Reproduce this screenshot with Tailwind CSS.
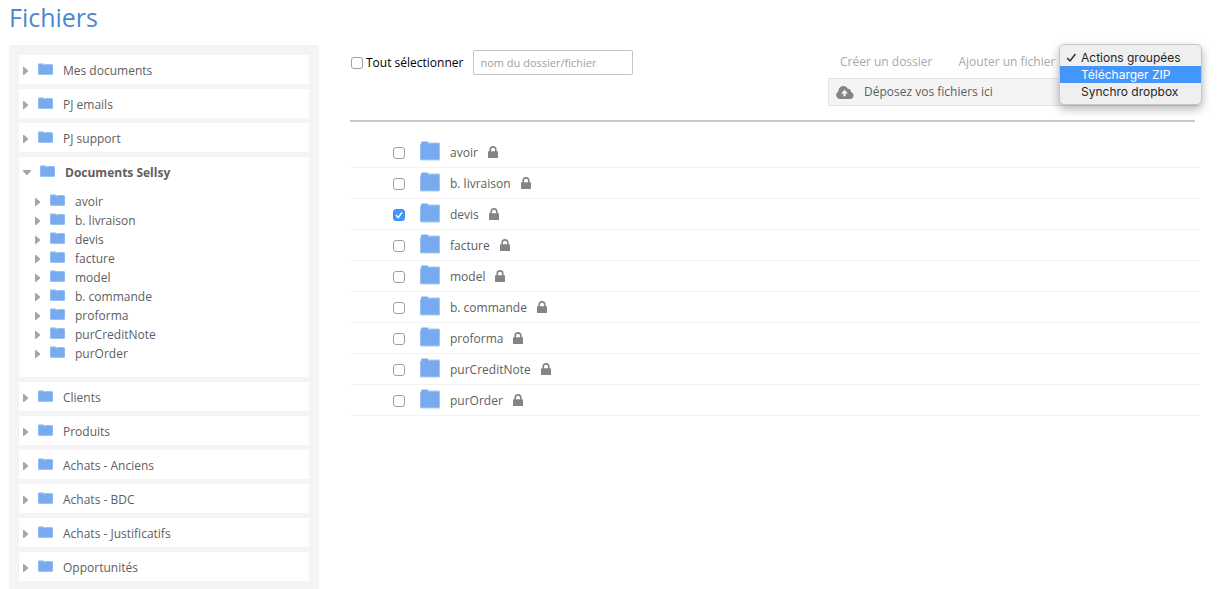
<!DOCTYPE html>
<html lang="fr">
<head>
    <meta charset="UTF-8">
    <meta name="viewport" content="width=device-width, initial-scale=1.0">
    <title>Fichiers</title>
    <script src="https://cdn.jsdelivr.net/npm/@tailwindcss/browser@4"></script>
</head>
<body class="bg-white font-['Open_Sans',sans-serif] text-[12px] text-[#606060]">
    <!-- Icons -->
    <svg class="hidden">
        <symbol id="icon-folder-small" viewBox="0 0 16 12">
            <path d="M0 1.4Q0 .2 1.2 .2H5.2Q6 .2 6.4 1.2H14Q15 1.2 15 2.2V11Q15 12 14 12H1Q0 12 0 11z" fill="#a9cdf3"/>
            <path d="M.5 2.2Q.5 1.2 1.4 1.2H5L6 2.4H6.8L7.2 1.6H13.8Q14.6 1.8 14.6 2.6V10.4Q14.6 11.2 13.8 11.2H1.2Q.5 11.2 .5 10.4z" fill="#78aaf0"/>
        </symbol>
        <symbol id="icon-folder" viewBox="0 0 20 20">
            <path d="M1 1.2Q1 .2 2 .2H7.4Q8.6 .2 8.8 1.6H19Q20 1.6 20 2.6V18.6Q20 19.6 19 19.6H1Q0 19.6 0 18.6V4Q0 3 1 2.6z" fill="#a9cdf3"/>
            <path d="M1.4 2Q1.4 1 2.2 1H7Q7.8 1 8.2 2.4L9.4 3.4 10.2 2.6H18.4Q19.2 2.6 19.2 3.4V17.8Q19.2 18.6 18.4 18.6H1.4Q.6 18.6 .6 17.8V4.4Q.6 3.6 1.4 3.2z" fill="#78aaf0"/>
        </symbol>
        <symbol id="icon-lock" viewBox="0 0 10 12">
            <path d="M2.2 6V3.7a2.8 2.8 0 0 1 5.6 0V6" fill="none" stroke="#848484" stroke-width="1.6"/>
            <rect x="0" y="5.2" width="10" height="6.8" rx=".6" fill="#848484"/>
        </symbol>
        <symbol id="icon-right" viewBox="0 0 5 8">
            <path d="M0 0H1L5 3.5V4.5L1 8H0z" fill="#a6a6a6"/>
        </symbol>
        <symbol id="icon-down" viewBox="0 0 8 5">
            <path d="M0 0H8V1L4.5 5H3.5L0 1z" fill="#a6a6a6"/>
        </symbol>
    </svg>

    <h1 class="pl-[9px] pt-px text-[25px] leading-8 text-[#4b88cf]">Fichiers</h1>

    <div class="flex items-stretch pl-[9px] pr-[26px] pt-3">
        <!-- Folder tree -->
        <nav class="w-[310px] shrink-0 bg-[#f4f4f4] px-2.5 pb-2 pt-2.5">
            <ul id="tree" class="flex flex-col gap-[5px]"></ul>
        </nav>

        <main class="ml-[31px] min-w-0 flex-1">
            <!-- Toolbar -->
            <div class="mr-[5px] flex items-start justify-between border-b-2 border-[#c8c8c8] pb-[14px]">
                <div class="flex items-center pt-[5px]">
                    <label class="flex items-center gap-[3px] pl-px text-black">
                        <input type="checkbox" class="size-3 appearance-none rounded-[3px] border border-[#a0a0a0] bg-white">
                        Tout sélectionner
                    </label>
                    <input type="text" aria-label="nom du dossier/fichier" placeholder="nom du dossier/fichier" class="ml-2.5 h-[25px] w-40 rounded-[2px] border border-[#c4c4c4] px-1.5 text-[11px] placeholder:text-[#a0a0a0]">
                </div>
                <div class="w-[367px]">
                    <div class="relative flex h-[33px] items-center pl-3 text-[#a8a8a8]">
                        <a href="#" class="whitespace-nowrap">Créer un dossier</a>
                        <a href="#" class="ml-[26px] whitespace-nowrap">Ajouter un fichier</a>
                        <select aria-label="Actions groupées" class="ml-2 h-5 w-[120px] appearance-none">
                            <option>Actions groupées</option>
                            <option>Télécharger ZIP</option>
                            <option>Synchro dropbox</option>
                        </select>
                        <!-- Open menu of the select -->
                        <ul role="listbox" class="absolute -right-[7px] -top-px z-10 w-[143px] rounded-[5px] border border-[#c6c6c6] bg-[#efefef] py-1 font-[Inter,sans-serif] text-[12px] leading-[17px] text-[#262626] shadow-[0_4px_10px_rgba(0,0,0,0.3)]">
                            <li role="option" class="flex items-center pl-1.5">
                                <svg class="mr-1 size-[11px]" viewBox="0 0 11 11"><path d="M1.2 6 4 9 9.4 2" fill="none" stroke="#262626" stroke-width="1.4"/></svg>
                                Actions groupées
                            </li>
                            <li role="option" aria-selected="true" class="bg-[#4396fb] pl-[21px] text-white">Télécharger ZIP</li>
                            <li role="option" class="pl-[21px]">Synchro dropbox</li>
                        </ul>
                    </div>
                    <div class="-mr-[3px] flex h-7 items-center border border-[#e4e4e4] bg-[#f4f4f4] pl-[7px]">
                        <svg class="mr-2.5 h-[13px] w-[18px]" viewBox="0 0 18 13">
                            <path d="M4 13A4 4 0 0 1 2.4 5.4 5 5 0 0 1 11.8 2.8 3 3 0 0 1 15 6 3.6 3.6 0 0 1 14.4 13z" fill="#848484"/>
                            <path d="M8.5 3.8 12 7.4H9.6V10.2H7.4V7.4H5z" fill="#f4f4f4"/>
                        </svg>
                        Déposez vos fichiers ici
                    </div>
                </div>
            </div>

            <!-- Files -->
            <ul id="files" class="pt-[15px]"></ul>
        </main>
    </div>

    <script>
        const folders = ['avoir', 'b. livraison', 'devis', 'facture', 'model', 'b. commande', 'proforma', 'purCreditNote', 'purOrder'];
        const roots = ['Mes documents', 'PJ emails', 'PJ support', 'Documents Sellsy', 'Clients', 'Produits', 'Achats - Anciens', 'Achats - BDC', 'Achats - Justificatifs', 'Opportunités'];

        const subTree = folders.map(name => `
            <li>
                <button class="flex h-[19px] items-center">
                    <svg class="h-2 w-[5px]"><use href="#icon-right"/></svg>
                    <svg class="mb-[3px] ml-2.5 h-3 w-4"><use href="#icon-folder-small"/></svg>
                    <span class="ml-[9px]">${name}</span>
                </button>
            </li>
        `).join('');

        document.getElementById('tree').innerHTML = roots.map(name => {
            if (name === 'Documents Sellsy') {
                return `
                    <li class="bg-white pb-[14px]">
                        <button class="flex h-[31px] items-center pl-1 font-bold" aria-expanded="true">
                            <svg class="h-[5px] w-2"><use href="#icon-down"/></svg>
                            <svg class="mb-[3px] ml-[9px] h-3 w-4"><use href="#icon-folder-small"/></svg>
                            <span class="ml-[9px]">${name}</span>
                        </button>
                        <ul class="pl-4 pt-1">${subTree}</ul>
                    </li>
                `;
            }
            return `
                <li class="bg-white">
                    <button class="flex h-[29px] w-full items-center pl-1 pt-0.5">
                        <svg class="h-2 w-[5px]"><use href="#icon-right"/></svg>
                        <svg class="mb-[3px] ml-2.5 h-3 w-4"><use href="#icon-folder-small"/></svg>
                        <span class="ml-[9px]">${name}</span>
                    </button>
                </li>
            `;
        }).join('');

        document.getElementById('files').innerHTML = folders.map(name => `
            <li class="flex h-[31px] items-center border-b border-[#f2f2f2] pl-[43px] pt-0.5">
                <label class="flex items-center">
                    <span class="relative flex size-3">
                        <input type="checkbox" ${name === 'devis' ? 'checked' : ''} class="peer size-3 appearance-none rounded-[3px] border border-[#a0a0a0] bg-white checked:border-[#3b8df5] checked:bg-[#4396fb]">
                        <svg class="absolute inset-0 hidden size-3 peer-checked:block" viewBox="0 0 12 12"><path d="M3 6.2 5.2 8.6 9 3.4" fill="none" stroke="#fff" stroke-width="1.6"/></svg>
                    </span>
                    <svg class="mb-1 ml-[15px] size-5"><use href="#icon-folder"/></svg>
                    <span class="ml-2.5">${name}</span>
                </label>
                <svg class="mb-0.5 ml-2.5 h-3 w-2.5"><use href="#icon-lock"/></svg>
            </li>
        `).join('');
    </script>
</body>
</html>
